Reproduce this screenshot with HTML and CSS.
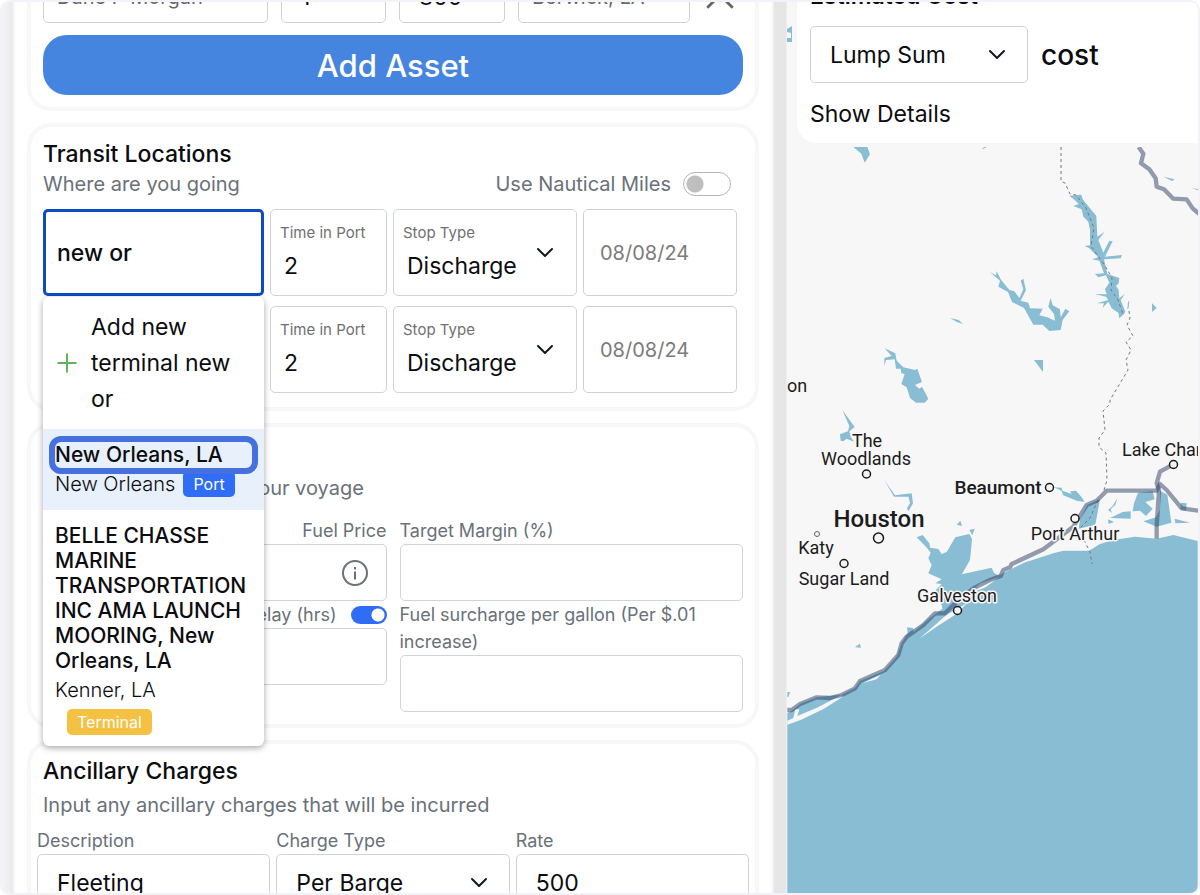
FILE: index.html
```html
<!DOCTYPE html>
<html lang="en">
<head>
<meta charset="utf-8">
<meta name="viewport" content="width=device-width, initial-scale=1">
<title>Voyage Estimate</title>
<link rel="stylesheet" href="styles.css">
</head>
<body>
<div class="frame">
  <main class="planner">
    <form class="sections">
      <section class="card">
        <div class="asset-row">
          <input class="box soft" aria-label="Asset name" value="Dane P Morgan">
          <input class="box" aria-label="Quantity" value="1">
          <input class="box" aria-label="Horsepower" value="800">
          <input class="box soft" aria-label="Home location" value="Berwick, LA">
          <button class="remove" type="button" aria-label="Remove asset">
            <svg viewBox="0 0 24 24" width="34" height="34"><path d="M3 3 21 21M21 3 3 21"/></svg>
          </button>
        </div>
        <button class="add-asset" type="button">Add Asset</button>
      </section>

      <section class="card transit">
        <h2>Transit Locations</h2>
        <div class="subrow">
          <p class="subtitle">Where are you going</p>
          <label class="nautical">Use Nautical Miles <input class="switch" type="checkbox"></label>
        </div>
        <div class="stops">
          <div class="stop">
            <div class="combo">
              <input class="box location" aria-label="Location" value="new or">
              <div class="menu">
                <button class="option add" type="button">
                  <svg viewBox="0 0 20 20" width="20" height="20"><path d="M10 0.500v19M0.500 10h19"/></svg>
                  <span>Add new terminal new or</span>
                </button>
                <button class="option active" type="button">
                  <span class="callout"></span>
                  <strong>New Orleans, LA</strong>
                  <span class="place">New Orleans <span class="badge port">Port</span></span>
                </button>
                <button class="option" type="button">
                  <strong>BELLE CHASSE MARINE TRANSPORTATION INC AMA LAUNCH MOORING, New Orleans, LA</strong>
                  <span class="place">Kenner, LA</span>
                  <span class="badge terminal">Terminal</span>
                </button>
              </div>
            </div>
            <label class="stop-field">Time in Port<input value="2"></label>
            <label class="stop-field">Stop Type
              <select><option>Discharge</option></select>
              <svg class="chevron" viewBox="0 0 18 12" width="18" height="12"><path d="M2 2l7 7 7-7"/></svg>
            </label>
            <input class="box date" aria-label="Date" placeholder="08/08/24">
          </div>
          <div class="stop">
            <input class="box location plain" aria-label="Location">
            <label class="stop-field">Time in Port<input value="2"></label>
            <label class="stop-field">Stop Type
              <select><option>Discharge</option></select>
              <svg class="chevron" viewBox="0 0 18 12" width="18" height="12"><path d="M2 2l7 7 7-7"/></svg>
            </label>
            <input class="box date" aria-label="Date" placeholder="08/08/24">
          </div>
        </div>
      </section>

      <section class="card">
        <h2>Voyage Inputs</h2>
        <p class="subtitle spaced">Provide details about your voyage</p>
        <div class="inputs">
          <div class="column">
            <label class="caption end" for="fuel">Fuel Price</label>
            <div class="with-icon">
              <input class="box" id="fuel">
              <svg class="info" viewBox="0 0 28 28" width="28" height="28"><circle cx="14" cy="14" r="12"/><path d="M14 12.500v8M14 8v2.500"/></svg>
            </div>
            <div class="caption end">
              <label for="delay">Delay (hrs)</label>
              <input class="switch on" type="checkbox" checked aria-label="Include delay">
            </div>
            <input class="box" id="delay">
          </div>
          <div class="column">
            <label class="caption" for="margin">Target Margin (%)</label>
            <input class="box" id="margin">
            <label class="caption" for="surcharge">Fuel surcharge per gallon (Per $.01 increase)</label>
            <input class="box" id="surcharge">
          </div>
        </div>
      </section>

      <section class="card">
        <h2>Ancillary Charges</h2>
        <p class="subtitle spaced">Input any ancillary charges that will be incurred</p>
        <div class="charges">
          <div class="column">
            <label class="caption" for="description">Description</label>
            <input class="box" id="description" value="Fleeting">
          </div>
          <div class="column">
            <label class="caption" for="type">Charge Type</label>
            <div class="with-icon">
              <select class="box" id="type"><option>Per Barge</option></select>
              <svg class="chevron" viewBox="0 0 18 12" width="18" height="12"><path d="M2 2l7 7 7-7"/></svg>
            </div>
          </div>
          <div class="column">
            <label class="caption" for="rate">Rate</label>
            <input class="box" id="rate" value="500">
          </div>
        </div>
      </section>
    </form>
  </main>

  <aside class="map-panel">
    <svg class="map" viewBox="787 2 411 891" preserveAspectRatio="xMinYMin slice" role="img" aria-label="Map of the Gulf coast">
      <g class="water">
        <path d="M787 29l5-3v16h-5v-4h4v-5l-4-1z"/>
        <g transform="translate(780) scale(.33333)">
          <path d="M220 441h42l8 22-16 25-10-27zM606 447l8-7 6 1-10 6zM1150 530l34 8-8 5zM1236 565l20 2v4z"/>
          <path d="M868 587L904 584 908 598 949 648 952 710 974 695 955 720 970 758 988 722 998 724 985 750 975 770 1026 765 1022 775 972 778 982 822 1018 834 1016 850 1008 858 1016 870 1018 895 1035 882 1022 900 1036 935 1032 942 1018 955 1015 938 995 925 985 905 968 923 972 910 950 910 985 900 978 890 945 882 980 883 975 868 988 848 978 826 955 832 945 822 972 820 958 782 936 778 955 772 928 745 914 738 930 736 930 690 925 665 910 650 905 628 880 618 896 612 884 600z"/>
        </g>
        <g transform="translate(980 240) scale(.33333)">
          <path d="M30 97L48 106 50 94 62 118 88 150 103 154 118 174 130 148 122 122 130 116 138 150 122 182 145 188 150 205 188 206 178 226 202 232 225 242 222 222 205 200 212 174 218 196 240 208 242 232 256 206 268 214 248 240 242 270 208 273 188 254 160 254 132 204 96 186 84 156 55 140 60 122z"/>
          <path d="M162 360h27v36zM516 190l14 14-14 12zM442 208l2-22 4-4-2 22z"/>
        </g>
        <g transform="translate(780 290) scale(.33333)">
          <path d="M510 84l26 6 13 12-18-6z"/>
          <path d="M314 175L346 190 350 212 370 232 405 240 412 236 426 276 405 285 418 296 426 290 445 326 434 338 408 338 390 324 380 292 364 282 374 252 364 250 362 236 348 236 344 208 318 210 313 228 313 204 335 198z"/>
          <path d="M187 360L224 411 208 424 212 440 222 455 200 446 190 454 182 452 180 433 204 424 208 408z"/>
          <path d="M313 570L345 616 395 610 399 640 385 664 381 655 390 640 386 620 342 620z"/>
        </g>
        <g transform="translate(780 480) scale(.33333)">
          <path d="M410 172L428 165 448 190 450 203 475 207 485 222 500 216 526 172 568 162 576 178 570 240 550 275 545 283 635 263 642 278 660 290 600 340 490 395 482 365 468 330 485 312 466 310 485 298 445 280 455 255 445 235 452 218 442 205z"/>
          <path d="M541 122l5 16-16-4zM568 150l16-4-7 20zM225 502l14-11 4 12zM22 636h8l-5 16-3-2z"/>
          <path d="M22 700l13-8 25-20 50-20 75-8 40-20 15-21 72-30 38-43 15-40 18-32-2-16 18 2 2 12 46-40 35-26 60-36 50-40 80-36 60-30 88-28 30-8h77l33-20 40-12 65-10 65 6 50-11 73 18v1085H22z"/>
        </g>
        <g transform="translate(980 460) scale(.33333)">
          <path d="M222 82L245 83 247 92 275 102 270 94 288 92 304 110 314 126 290 122 250 106 244 92z"/>
          <path d="M300 180l22-46 38-16-14 76-50 12z"/>
          <path d="M384 150l14-12 14-24-6 20-14 14 4 10zM390 174l38-18 24-2v22zM384 178l18 8-16 6zM474 98l44-4 6 24-28 8 22 20-20 22-18-16-22 2 4-24z"/>
          <path d="M540 92l22 12 12 84-44 12-40-16 38-12 12-24zM584 176l46 12-44 2zM602 128l18 2-2 22-16-4z"/>
        </g>
      </g>
      <g class="sand" transform="translate(780 480) scale(.33333)">
        <path d="M418 476l82-72 62-35-34 34-56 36z"/>
        <path d="M565 342l36-32 56-18-40 30z"/>
        <path d="M22 722l18-8 6-26h12l-6 20 62-26 68-36 10 2-60 38-70 34-40 14z"/>
        <path d="M242 612l60-28-12 14-44 12z"/>
      </g>
      <path class="border-line" d="M1061 147V181L1065 183 1070 194 1076 195 1086 208 1094 228 1091 246 1098 256 1104 264 1112 278 1111 290 1118 300 1123 314M1129 311L1130 318 1127 325 1133 336 1126 342 1131 350 1126 360 1128 370 1119 385 1110 400 1110 404 1103 411 1105 430 1099 438 1099 447 1106 453 1107 480 1104 490M1098 500L1090 518 1080 528M1084 540L1090 552 1092 564"/>
      <g class="channel">
        <path transform="translate(780 480) scale(.33333)" d="M22 690h13l25-18 50-20 40 2 35-9 40-20 15-22 75-33 40-45 10-35 15-20 50-35 35-35h30l35-35 50-40 50-25 32-12 8-18 20-8 5-10 95-44 90-68 40-65 30-13 30-30h150l10-20 20 18 45 55 50 7"/>
        <path transform="translate(980 460) scale(.33333)" d="M580 13l-40 22-10 35 7 20-7 110v36"/>
        <path transform="translate(780) scale(.33333)" d="M1076 441L1090 461 1083 490 1108 508 1127 535 1130 560 1152 568 1180 596 1220 598 1238 625 1258 642"/>
      </g>
      <g class="town">
        <circle cx="866.500" cy="474" r="4"/><circle cx="878.500" cy="538" r="5"/><circle class="small" cx="817" cy="534" r="2.500"/>
        <circle cx="844" cy="563.500" r="4"/><circle cx="957.500" cy="610.500" r="4"/><circle cx="1049.500" cy="487.500" r="4"/>
        <circle cx="1075" cy="518.500" r="4"/><circle cx="1173.500" cy="464.500" r="4"/>
      </g>
      <g class="places">
        <text x="797" y="392">on</text>
        <text x="867" y="447">The</text>
        <text x="866" y="465">Woodlands</text>
        <text x="816" y="554">Katy</text>
        <text x="844" y="585">Sugar Land</text>
        <text x="957" y="602">Galveston</text>
        <text x="1075" y="540">Port Arthur</text>
        <text class="start" x="1122" y="456">Lake Charles</text>
        <text class="town-name" x="998" y="494">Beaumont</text>
        <text class="city" x="879" y="527">Houston</text>
      </g>
    </svg>
    <section class="estimate">
      <h2>Estimated Cost</h2>
      <div class="cost-row">
        <div class="with-icon">
          <select class="box" aria-label="Cost basis"><option>Lump Sum</option></select>
          <svg class="chevron" viewBox="0 0 18 12" width="18" height="12"><path d="M2 2l7 7 7-7"/></svg>
        </div>
        <span class="cost">cost</span>
      </div>
      <button class="details" type="button">Show Details</button>
    </section>
  </aside>
</div>
</body>
</html>
```

FILE: styles.css
```css
* {
  box-sizing: border-box;
}

body {
  margin: 0;
  background: #fff;
  color: #0b0c10;
  font-family: Inter, "Liberation Sans", sans-serif;
  font-size: 23px;
}

h2,
p {
  margin: 0;
}

button,
input,
select {
  margin: 0;
  padding: 0;
  border: 0;
  background: none;
  color: inherit;
  font: inherit;
}

.frame {
  display: grid;
  grid-template-columns: 785fr 411fr;
  height: 100vh;
  overflow: hidden;
  border: 2px solid #f2f2f8;
  border-radius: 10px;
}

.planner {
  min-width: 0;
  overflow: hidden;
  padding: 0 28px 0 25px;
  background: linear-gradient(to right, #f4f4f7 0, #ebebeb 10px, #f6f6f6 12px, #fff 14px, #fff calc(100% - 17px), #f6f6f6 calc(100% - 14px), #e6e6e6 calc(100% - 13px), #e6e6e6 calc(100% - 1px), #f7f7f7 100%);
}

.sections {
  display: flex;
  flex-direction: column;
  gap: 12px;
  margin-top: -52px;
}

.card {
  padding: 12px;
  border: 4px solid #f7f7f8;
  border-radius: 24px;
}

h2 {
  font-size: 23px;
  font-weight: 500;
  line-height: 30px;
}

.subtitle {
  color: #697179;
  font-size: 20px;
  line-height: 30px;
}

.subtitle.spaced {
  margin-top: 4px;
}

.box {
  display: block;
  width: 100%;
  min-width: 0;
  height: 57px;
  padding: 0 19px;
  border: 1px solid #ced4da;
  border-radius: 5px;
  background: #fff;
  appearance: none;
  outline: 0;
}

.asset-row {
  display: grid;
  grid-template-columns: 225fr 105fr 106fr 172fr 34fr;
  gap: 13px;
  margin: 0 6px 12px 0;
}

.asset-row .box {
  padding-top: 4px;
  border-color: #d0d0d0;
}

.asset-row .soft {
  padding: 4px 13px 0;
  color: #666;
  font-size: 20px;
}

.remove {
  display: grid;
  place-items: center;
}

.remove svg {
  fill: none;
  stroke: #666;
  stroke-width: 2;
}

.add-asset {
  display: block;
  width: 100%;
  height: 60px;
  border-radius: 24px;
  background: #4585e0;
  color: #fff;
  font-size: 31px;
  font-weight: 500;
}

.transit {
  padding-bottom: 14px;
}

.subrow {
  display: flex;
  justify-content: space-between;
}

.nautical {
  display: flex;
  align-items: center;
  gap: 12px;
  margin-right: 12px;
  color: #697179;
  font-size: 20px;
}

.switch {
  width: 48px;
  height: 24px;
  border: 1px solid #b5b5b5;
  border-radius: 12px;
  background: radial-gradient(circle at 11px 11px, #bfbfbf 8px, transparent 9px);
  appearance: none;
}

.switch.on {
  width: 36px;
  height: 18px;
  border: 0;
  background: radial-gradient(circle at 27px 9px, #fff 6px, #2f6df6 7px);
}

.stops {
  display: grid;
  gap: 10px;
  margin-top: 10px;
}

.stop {
  display: grid;
  grid-template-columns: 221fr 117fr 184fr 154fr;
  gap: 6px;
  margin-right: 6px;
}

.combo {
  position: relative;
}

.location {
  height: 87px;
  padding: 0 11px;
  border: 3px solid #0d4bc4;
  font-size: 23px;
  font-weight: 500;
}

.location.plain {
  border: 1px solid #ced4da;
}

.stop-field {
  position: relative;
  display: flex;
  flex-direction: column;
  height: 87px;
  padding: 12px 9px;
  border: 1px solid #ced4da;
  border-radius: 5px;
  color: #6f6f6f;
  font-size: 15px;
  line-height: 22px;
}

.stop-field input,
.stop-field select {
  width: 100%;
  height: 36px;
  margin-top: 4px;
  padding-left: 4px;
  appearance: none;
  outline: 0;
  color: #0b0c10;
  font-size: 23px;
  line-height: 36px;
}

.chevron {
  position: absolute;
  top: 50%;
  right: 22px;
  margin-top: -6px;
  fill: none;
  stroke: #101820;
  stroke-width: 2;
  stroke-linecap: round;
  stroke-linejoin: round;
  pointer-events: none;
}

.date {
  height: 87px;
  padding: 0 16px;
  border-color: #d0d0d0;
  font-size: 20px;
}

.date::placeholder {
  color: #7b7b7b;
  opacity: 1;
}

.menu {
  position: absolute;
  z-index: 2;
  top: 88px;
  left: 0;
  width: 100%;
  border-radius: 6px;
  background: #fff;
  box-shadow: 0 2px 6px rgb(0 0 0 / 35%);
}

.option {
  position: relative;
  display: block;
  width: 100%;
  padding: 13px 12px 11px;
  font-size: 20px;
  line-height: 26px;
  text-align: left;
}

.option.add {
  display: flex;
  align-items: center;
  gap: 14px;
  padding: 12px 12px 12px 14px;
  font-size: 23px;
  line-height: 36px;
}

.option.add svg {
  flex: none;
  fill: none;
  stroke: #5fb35b;
  stroke-width: 2;
}

.option strong {
  display: block;
  font-size: 21px;
  font-weight: 500;
  line-height: 25px;
}

.option.active {
  background: #e8f0fb;
}

.place {
  display: flex;
  align-items: center;
  gap: 8px;
  height: 30px;
  margin-top: 2px;
  font-weight: 300;
}

.callout {
  position: absolute;
  inset: 7px 6px 36px;
  border: 6px solid #4571e0;
  border-radius: 12px;
}

.badge {
  display: inline-block;
  padding: 0 10px;
  border-radius: 5px;
  color: #fff;
  font-size: 16px;
  font-weight: 400;
  line-height: 26px;
}

.port {
  background: #2f6df6;
}

.terminal {
  margin: 4px 0 0 12px;
  background: #f5c142;
}

.inputs {
  display: grid;
  grid-template-columns: 1fr 1fr;
  gap: 13px;
  margin-top: 14px;
}

.caption {
  display: block;
  color: #697179;
  font-size: 18px;
  line-height: 27px;
}

.caption.end {
  display: flex;
  align-items: center;
  justify-content: flex-end;
  gap: 14px;
}

.with-icon {
  position: relative;
}

.info {
  position: absolute;
  top: 15px;
  right: 18px;
  fill: none;
  stroke: #697179;
  stroke-width: 2;
}

.charges {
  display: grid;
  grid-template-columns: 1fr 1fr 1fr;
  gap: 6px;
  margin: 7px -6px 0;
}

.map-panel {
  position: relative;
  overflow: hidden;
  background: #f7f7f7;
}

.map {
  position: absolute;
  inset: 0;
  width: 100%;
  height: 100%;
}

.water {
  fill: #89bdd3;
}

.sand {
  fill: #f7f7f7;
}

.border-line {
  fill: none;
  stroke: #777;
  stroke-dasharray: 3 3;
}

.channel {
  fill: none;
  stroke: #2b3f63;
  stroke-linejoin: round;
}

.channel path {
  stroke-width: 13;
  opacity: 0.5;
}

.town {
  fill: #f4f4f4;
  stroke: #1b1b1b;
  stroke-width: 1.5;
}

.town .small {
  stroke: #666;
  stroke-width: 1;
}

.places {
  fill: #1c1c1c;
  stroke: #f7f7f7;
  stroke-width: 3;
  stroke-linejoin: round;
  paint-order: stroke;
  font-family: Roboto, sans-serif;
  font-size: 18px;
  text-anchor: middle;
}

.places .start {
  text-anchor: start;
}

.places .town-name {
  font-size: 19px;
  font-weight: 500;
}

.places .city {
  font-size: 24px;
  font-weight: 500;
}

.estimate {
  position: relative;
  margin: -34px 0 0 6px;
  padding: 12px 12px 11px 13px;
  border: 4px solid #f7f7f7;
  border-right: 0;
  border-radius: 24px 0 0 24px;
  background: #fff;
}

.estimate h2 {
  font-weight: 600;
  line-height: 24px;
}

.cost-row {
  display: flex;
  align-items: center;
  gap: 13px;
  margin-top: 18px;
}

.cost-row .with-icon {
  flex: 0 1 218px;
}

.cost {
  font-size: 28px;
  font-weight: 500;
}

.details {
  display: block;
  margin-top: 13px;
  font-size: 23px;
  line-height: 36px;
}
```
